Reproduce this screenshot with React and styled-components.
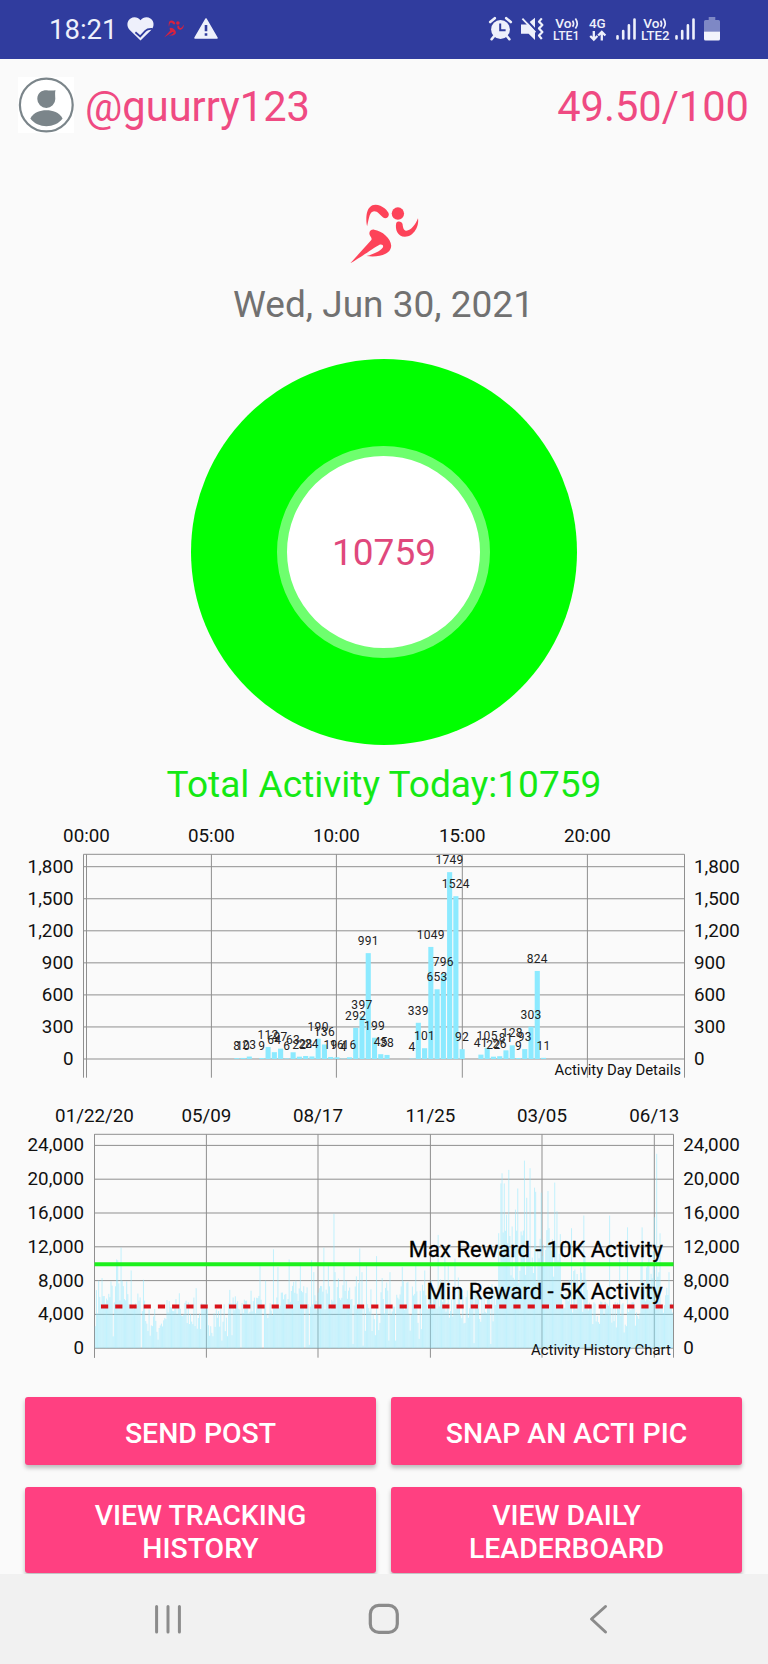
import React from 'react';
import styled, { createGlobalStyle } from 'styled-components';

// activity per 15 minute slot, [slot, count]
const dayData = [
  [24, 8], [25, 10], [26, 23], [28, 9], [29, 112], [30, 64], [31, 97], [32, 6],
  [33, 63], [34, 22], [35, 28], [36, 24], [37, 190], [38, 136], [39, 19], [40, 16],
  [41, 4], [42, 16], [43, 292], [44, 397], [45, 991], [46, 199], [47, 45], [48, 38],
  [52, 4], [53, 339], [54, 101], [55, 1049], [56, 653], [57, 796], [58, 1749],
  [59, 1524], [60, 92], [63, 41], [64, 105], [65, 22], [66, 26], [67, 81], [68, 128],
  [69, 9], [70, 93], [71, 303], [72, 824], [73, 11],
];

// history ranges, [from x, to x, low, high]
const historyRanges = [
  [94, 109, 2600, 7200], [109, 123, 5200, 8200], [123, 145, 4200, 6600],
  [145, 165, 1200, 4900], [165, 194, 2500, 6000], [194, 206, 1600, 5600],
  [206, 232, 1400, 5600], [232, 262, 4000, 6200], [262, 275, 2800, 5600],
  [275, 290, 4200, 6600], [290, 304, 5000, 8000], [304, 318, 4200, 7200],
  [318, 331, 4500, 7600], [331, 345, 5200, 8400], [345, 364, 4000, 8000],
  [364, 384, 1500, 7000], [384, 430, 1400, 8000], [430, 460, 3600, 8600],
  [460, 498, 2800, 8000], [498, 507, 9500, 14500], [507, 560, 7000, 14200],
  [560, 590, 4200, 10000], [590, 640, 1600, 6000], [640, 662, 3000, 12000],
  [662, 674, 3600, 7600],
];

const historyPeaks = [
  [98, 8000], [102, 8300], [111, 7900], [116, 10500], [117.5, 10400], [121, 11900], [126, 7900],
  [131, 9200], [143.5, 8100], [179, 6500], [196, 7100], [229, 6900], [250, 6800], [260, 9700],
  [265, 8000], [273.5, 11700], [278, 9600], [289, 10500], [295, 8000], [300, 10100], [307, 7200],
  [311.5, 10400], [313.5, 9000], [323, 11900], [328, 10000], [333, 15900], [335, 9000], [343, 9700],
  [356, 8500], [359.5, 11800], [361, 9000], [366, 9800], [375.5, 10900], [381.5, 8300], [389, 9000],
  [402, 9600], [415, 10000], [424.5, 9200], [438, 13400], [444, 10900], [448, 9800], [454, 10600],
  [500.5, 19500], [501.8, 20700], [504, 19500], [506, 15800], [508.5, 21100], [512, 14400],
  [515, 16400], [517.5, 18900], [524.5, 22200], [526, 17800], [530, 21300], [534, 19000],
  [535.5, 18500], [541, 18400], [547.5, 18600], [549, 14200], [554.5, 19600], [557, 16200],
  [560, 13500], [571, 14200], [583.5, 15700], [585, 10800], [609.5, 15700], [619, 11000],
  [627.5, 14300], [641.5, 14300], [648, 11800], [653.5, 15500], [656.5, 23000], [659, 13600],
  [660, 13200], [669, 9000],
];

const historyGaps = [
  [113, 1400], [140.5, 0], [157, 1000], [221, 900], [240, 0], [262, 0], [263, 0], [304, 0], [309, 400],
  [353, 500], [363, 300], [388, 900], [395, 900], [419, 1100], [465, 3000], [474, 600], [490, 500],
];

function buildHistory() {
  let seed = 7;
  const rand = () => {
    seed = (seed * 16807) % 2147483647;
    return seed / 2147483647;
  };
  const near = (list, x) => list.find((p) => Math.abs(p[0] - x) <= 0.56);
  const days = [];
  for (let i = 0; i < 516; i++) {
    const x = 94.8 + i * 1.1205;
    const range = historyRanges.find((r) => x >= r[0] && x < r[1]);
    const value = range[2] + (range[3] - range[2]) * Math.pow(rand(), 0.9);
    const fixed = near(historyPeaks, x) || near(historyGaps, x);
    days.push([x, fixed ? fixed[1] : value]);
  }
  return days;
}

const history = buildHistory();

const dayChart = {
  left: 83.5,
  right: 684.5,
  zero: 239,
  unit: 32.05 / 300,
  step: 300,
  rows: 7,
  labelLeft: 73.5,
  labelRight: 694,
  descEnd: 681,
  title: 'Activity Day Details',
  columns: [[86.5, '00:00'], [211.4, '05:00'], [336.4, '10:00'], [462.3, '15:00'], [587.4, '20:00']],
};

const historyChart = {
  left: 94.5,
  right: 673.5,
  zero: 248.2,
  unit: 33.8 / 4000,
  step: 4000,
  rows: 7,
  labelLeft: 84,
  labelRight: 683.3,
  descEnd: 670.8,
  title: 'Activity History Chart',
  columns: [[94.5, '01/22/20'], [206.4, '05/09'], [318, '08/17'], [430.4, '11/25'], [542, '03/05'], [654.3, '06/13']],
};

function Chart({ config, children }) {
  const rows = Array.from({ length: config.rows }, (_, i) => i * config.step);
  return (
    <ChartSvg viewBox="0 0 768 260">
      <GridLines>
        <path d={`M${config.left} 257.7V34.3H${config.right}V257.7`} />
        {rows.map((v) => (
          <path key={v} d={`M${config.left} ${config.zero - v * config.unit}H${config.right}`} />
        ))}
        {config.columns.map(([x]) => (
          <path key={x} d={`M${x} 34.3V257.7`} />
        ))}
      </GridLines>
      {children}
      {config.columns.map(([x, label]) => (
        <AxisText key={label} x={x} y="22" textAnchor="middle">{label}</AxisText>
      ))}
      {rows.map((v) => {
        const y = config.zero - v * config.unit + 6;
        const label = v.toLocaleString('en-US');
        return (
          <g key={v}>
            <AxisText x={config.labelLeft} y={y} textAnchor="end">{label}</AxisText>
            <AxisText x={config.labelRight} y={y}>{label}</AxisText>
          </g>
        );
      })}
      <ChartTitle x={config.descEnd} y="255" textAnchor="end">{config.title}</ChartTitle>
    </ChartSvg>
  );
}

function DayBars() {
  const { zero, unit } = dayChart;
  const slotX = (slot) => 86.5 + slot * 6.26;
  return (
    <>
      {dayData.map(([slot, v]) => (
        <rect key={slot} x={slotX(slot) - 2.5} y={zero - v * unit} width="5.1" height={v * unit} fill="#8ceaff" />
      ))}
      {dayData.map(([slot, v]) => (
        <BarText key={slot} x={slotX(slot)} y={zero - v * unit - 8} textAnchor="middle">{v}</BarText>
      ))}
    </>
  );
}

function HistoryBars() {
  const { zero, unit, left, right } = historyChart;
  return (
    <>
      {history.map(([x, v]) => (
        <rect key={x} x={x} y={zero - v * unit} width="1" height={v * unit} fill="#8ceaff" fillOpacity="0.5" />
      ))}
      <path d={`M${left} 164.3H${right}`} stroke="#1df01d" strokeWidth="4" />
      <path d={`M101 206.5H${right}`} stroke="#d8131a" strokeWidth="4" strokeDasharray="7.2 7.02" />
      <LimitText x="662.8" y="156.7" textAnchor="end">Max Reward - 10K Activity</LimitText>
      <LimitText x="662.8" y="199" textAnchor="end">Min Reward - 5K Activity</LimitText>
    </>
  );
}

function Runner({ color, width, height }) {
  return (
    <svg width={width} height={height} viewBox="450 71 206 178" fill={color}>
      <path d="M501 137C496 108 499 74 526 73C546 73 565 92 566 101C566 111 556 116 549 111C540 103 533 92 522 92C508 93 507 112 501 137Z" />
      <circle cx="593" cy="99" r="18.5" />
      <path d="M588 127C593 120 605 122 607 131C608 141 611 151 618 150C633 149 646 131 653 113C657 136 641 168 614 168C592 168 584 146 588 127Z" />
      <path d="M451 247L513 179C516 175 514 171 510 165C504 155 511 146 522 147C546 150 572 173 573 195C573 217 545 231 499 226C521 220 541 210 548 200C551 194 546 189 538 192C519 202 481 231 451 247Z" />
    </svg>
  );
}

function VoLte({ line, width }) {
  return (
    <svg width={width} height="24" viewBox={`0 0 ${width} 24`}>
      <StatusText x="2.2" y="10.8" fontSize="13.6">Vo</StatusText>
      <path d="M19.6 3.6q2 3.1 0 6.2M22.4 1.4q3.6 5.100 0 10.200" fill="none" stroke="#eef0fb" strokeWidth="1.700" />
      <StatusText x="0" y="23.200" fontSize="13.600" textLength={width - 0.5} lengthAdjust="spacingAndGlyphs">{`LTE${line}`}</StatusText>
    </svg>
  );
}

function Signal() {
  return (
    <svg width="20" height="22" viewBox="0 0 20 22" stroke="#eef0fb" strokeWidth="2.6" strokeLinecap="round">
      <path d="M1.5 18.2V20.4M7.2 13V20.4M12.9 7.4V20.4M18.5 1.6V20.4" />
    </svg>
  );
}

function App() {
  return (
    <Screen>
      <GlobalStyle />
      <StatusBar>
        <Clock>18:21</Clock>
        <StatusLeft>
          <svg width="27" height="24" viewBox="0 0 27 24">
            <path d="M13.5 23.6L3 13.3C-.8 9.2-.2 3.8 3.6 1.4 7-.7 11.3 .3 13.5 3.3 15.7 .3 20-.7 23.4 1.4 27.2 3.8 27.8 9.2 24 13.3Z" fill="#eef0fb" />
            <path d="M8.4 15.2L13.2 19.4L18.4 13.8Q20.5 11.6 25.5 12" fill="none" stroke="#303c9e" strokeWidth="1.8" />
          </svg>
          <Runner color="#d8213f" width={20} height={18} />
          <svg width="24" height="21" viewBox="0 0 24 21">
            <path d="M12 1L23 20H1Z" fill="#eef0fb" stroke="#eef0fb" strokeWidth="1.5" strokeLinejoin="round" />
            <path d="M12 7V13.2M12 15.2V17.8" stroke="#303c9e" strokeWidth="2.6" />
          </svg>
        </StatusLeft>
        <StatusRight>
          <svg width="23" height="24" viewBox="0 0 23 24">
            <circle cx="11.5" cy="12.5" r="9.4" fill="#eef0fb" />
            <path d="M1.2 5L5.8 1.2M21.8 5L17.2 1.2M4.8 19.5L2.6 22.2M18.2 19.5L20.4 22.2" stroke="#eef0fb" strokeWidth="2.6" strokeLinecap="round" />
            <path d="M11.2 6.5V13.2H16.6" fill="none" stroke="#303c9e" strokeWidth="2" />
          </svg>
          <svg width="23" height="24" viewBox="0 0 23 24">
            <path d="M0 7.5H5.5L14 .8V23L7.6 16.8H0Z" fill="#eef0fb" />
            <path d="M2.6 0L15 13.6" stroke="#303c9e" strokeWidth="2.2" />
            <path d="M1.4 1.6L14.4 15.4" stroke="#eef0fb" strokeWidth="1.8" />
            <path d="M20.8 1.4L18 4.6L21.4 8L18 11.4L21.4 15L18 18.6L20.8 22" fill="none" stroke="#eef0fb" strokeWidth="2.2" strokeLinejoin="round" />
          </svg>
          <VoLte line="1" width={27} />
          <svg width="18" height="24" viewBox="0 0 18 24">
            <StatusText x="0" y="10.8" fontSize="13.4">4G</StatusText>
            <path d="M4.8 14V22.5M1.2 19L4.8 22.6L8.4 19M12.8 23.5V15M9.2 18.5L12.8 14.9L16.4 18.5" fill="none" stroke="#eef0fb" strokeWidth="2.3" />
          </svg>
          <Signal />
          <VoLte line="2" width={29} />
          <Signal />
          <svg width="16" height="24" viewBox="0 0 16 24">
            <path d="M4.7 0H11.3V3H14.5Q16 3 16 4.5V14.5H0V4.5Q0 3 1.5 3H4.7Z" fill="#7e88c5" />
            <path d="M0 14.5H16V22Q16 23.5 14.5 23.5H1.5Q0 23.5 0 22Z" fill="#f3f4fc" />
          </svg>
        </StatusRight>
      </StatusBar>

      <Header>
        <Avatar>
          <svg width="56" height="56" viewBox="0 0 56 56">
            <circle cx="28.3" cy="28" r="26.4" fill="#fff" stroke="#7b858a" strokeWidth="2.2" />
            <path d="M37.5 13.2C36.8 15.5 37.200 18 37.3 22A9 9 0 1 1 19.3 22C19.3 15 25 12.8 30 13.4C33 13.600 35 13.600 37.5 13.2Z" fill="#7b858a" />
            <path d="M12.3 41.5C16 35 22 33.2 28.4 33.2S41 35 44.6 41.5C41 46.5 34.5 49.2 28.4 49.2S16 46.5 12.3 41.5Z" fill="#7b858a" />
          </svg>
        </Avatar>
        <UserName>@guurry123</UserName>
        <Balance>49.50/100</Balance>
      </Header>

      <Summary>
        <Runner color="#fd4359" width={69} height={60} />
        <DateText>Wed, Jun 30, 2021</DateText>
        <Donut>
          <DonutHole>10759</DonutHole>
        </Donut>
        <TotalText>Total Activity Today:10759</TotalText>
      </Summary>

      <Charts>
        <Chart config={dayChart}>
          <DayBars />
        </Chart>
        <Chart config={historyChart}>
          <HistoryBars />
        </Chart>
      </Charts>

      <Actions>
        <ActionButton>SEND POST</ActionButton>
        <ActionButton>SNAP AN ACTI PIC</ActionButton>
        <ActionButton>VIEW TRACKING<br />HISTORY</ActionButton>
        <ActionButton>VIEW DAILY<br />LEADERBOARD</ActionButton>
      </Actions>

      <NavBar>
        <svg width="32" height="32" viewBox="0 0 32 32" stroke="#8b8b8b" strokeWidth="3" strokeLinecap="round">
          <path d="M4.6 3.5V29M16 3.5V29M27.4 3.5V29" />
        </svg>
        <svg width="32" height="32" viewBox="0 0 32 32" fill="none" stroke="#8b8b8b" strokeWidth="3.2">
          <rect x="2.3" y="2.4" width="27" height="27" rx="8.5" />
        </svg>
        <svg width="32" height="32" viewBox="0 0 32 32" fill="none" stroke="#8b8b8b" strokeWidth="3" strokeLinecap="round" strokeLinejoin="round">
          <path d="M22.5 3.5L8.5 16L22.5 29" />
        </svg>
      </NavBar>
    </Screen>
  );
}

export default App;


const GlobalStyle = createGlobalStyle`
  body {
    margin: 0;
    background: #fafafa;
    font-family: Roboto, "Liberation Sans", sans-serif;
  }

  svg {
    display: block;
    flex-shrink: 0;
    overflow: visible;
  }
`

const Screen = styled.div`
  display: flex;
  flex-direction: column;
  width: 768px;
  height: 1664px;
  overflow: hidden;
  background: #fafafa;
`

const StatusBar = styled.div`
  display: flex;
  align-items: center;
  height: 59px;
  flex-shrink: 0;
  padding: 0 48px 2px 49px;
  box-sizing: border-box;
  background: #303c9e;
`

const Clock = styled.span`
  width: 78px;
  color: #eef0fb;
  font-size: 27.5px;
  line-height: 32px;
  padding-top: 3px;
`

const StatusLeft = styled.div`
  display: flex;
  align-items: center;
  gap: 10px;
`

const StatusRight = styled.div`
  display: flex;
  align-items: center;
  gap: 9px;
  margin-left: auto;

  svg:nth-of-type(6),
  svg:nth-of-type(7) {
    margin-left: -4px;
  }
`

const StatusText = styled.text`
  fill: #eef0fb;
  font-weight: 500;
`

const Header = styled.header`
  display: flex;
  align-items: center;
  height: 56px;
  flex-shrink: 0;
  padding: 18px 19px 0 18px;
  color: #ef4a82;
  font-size: 41.6px;
  line-height: 56px;
`

const Avatar = styled.div`
  width: 56px;
  height: 56px;
  background: #fff;
`

const UserName = styled.span`
  margin-left: 11px;
  padding-top: 3px;
`

const Balance = styled.span`
  margin-left: auto;
  padding-top: 3px;
`

const Summary = styled.section`
  display: flex;
  flex-direction: column;
  align-items: center;
  height: 687px;
  flex-shrink: 0;
  padding-top: 71px;
  box-sizing: border-box;
`

const DateText = styled.div`
  margin-top: 19px;
  padding-right: 1px;
  color: #717171;
  font-size: 37px;
  line-height: 44px;
`

const Donut = styled.div`
  display: flex;
  align-items: center;
  justify-content: center;
  width: 386px;
  height: 386px;
  margin-top: 32px;
  border-radius: 50%;
  background: #00ff00;
`

const DonutHole = styled.div`
  display: flex;
  align-items: center;
  justify-content: center;
  width: 192px;
  height: 192px;
  padding-left: 1px;
  margin-left: -1px;
  border: 10px solid #6eff6e;
  border-radius: 50%;
  background: #fff;
  color: #e0487c;
  font-size: 37px;
`

const TotalText = styled.div`
  margin-top: 18px;
  color: #14e914;
  font-size: 37.1px;
  line-height: 44px;
`

const Charts = styled.section`
  display: flex;
  flex-direction: column;
  gap: 20px;
  height: 540px;
  flex-shrink: 0;
`

const ChartSvg = styled.svg`
  width: 768px;
  height: 260px;
`

const GridLines = styled.g`
  fill: none;
  stroke: #8f8f8f;
  stroke-width: 1;
`

const AxisText = styled.text`
  fill: #111;
  font-size: 18.8px;
`

const BarText = styled.text`
  fill: #222;
  font-size: 12px;
  letter-spacing: 0.3px;
`

const ChartTitle = styled.text`
  fill: #111;
  font-size: 14.9px;
`

const LimitText = styled.text`
  fill: #000;
  stroke: #000;
  stroke-width: 0.3px;
  font-size: 22px;
`

const Actions = styled.section`
  display: grid;
  grid-template-columns: 351px 351px;
  grid-template-rows: 68px 86px;
  justify-content: center;
  column-gap: 15px;
  row-gap: 21.5px;
  height: 214px;
  flex-shrink: 0;
  padding: 37px 1px 0 0;
  box-sizing: border-box;
  overflow: hidden;
`

const ActionButton = styled.button`
  display: flex;
  align-items: center;
  justify-content: center;
  padding: 4px 0 0;
  border: 0;
  border-radius: 3px;
  background: #ff4081;
  color: #fff;
  font-family: inherit;
  font-size: 28.4px;
  font-weight: 500;
  line-height: 33px;
  text-align: center;
  box-shadow: 0 3px 4px rgba(0, 0, 0, 0.25);
`

const NavBar = styled.nav`
  display: flex;
  align-items: flex-start;
  flex: 1;
  gap: 183.5px;
  padding: 29px 0 0 152px;
  background: #f1f1f1;
`
